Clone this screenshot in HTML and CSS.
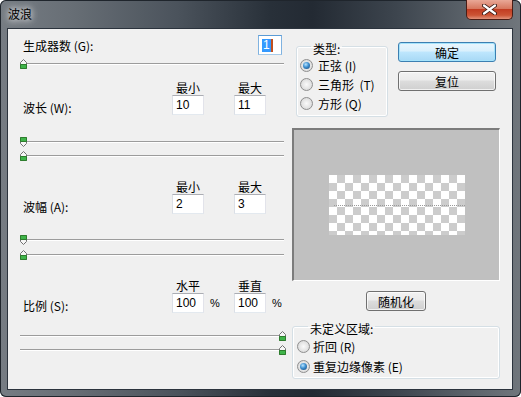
FILE: index.html
```html
<!DOCTYPE html>
<html lang="zh-CN">
<head>
    <meta charset="UTF-8">
    <meta name="viewport" content="width=device-width, initial-scale=1.0">
    <link rel="stylesheet" href="styles.css">
    <title>波浪</title>
</head>
<body>
    <div class="window">
        <div class="titlebar">
            <span class="title">波浪</span>
            <div class="close-btn">
                <svg width="15" height="11" viewBox="0 0 15 11">
                    <path d="M2 1.5 L13 9.5 M13 1.5 L2 9.5" stroke="#3b1a14" stroke-width="4" stroke-linecap="round"/>
                    <path d="M2 1.5 L13 9.5 M13 1.5 L2 9.5" stroke="#fff" stroke-width="2.2" stroke-linecap="round"/>
                </svg>
            </div>
        </div>

        <div class="client">
            <!-- left - sliders and fields -->
            <div class="left-col">
                <div class="count-row">
                    <span class="label">生成器数 (G):</span>
                    <div class="input count-input"><span class="sel">1</span><span class="caret"></span></div>
                </div>
                <div class="slider s-count">
                    <svg class="thumb" width="7" height="10" viewBox="0 0 7 10"><path d="M0.5 3.5 L3.5 0.5 L6.5 3.5 V9.5 H0.5 Z" fill="#f6f6f6" stroke="#707070"/><path d="M0.5 5.5 H6.5 V9.5 H0.5 Z" fill="#3fb44a" stroke="#2d7d2d"/></svg>
                </div>

                <div class="param p-a">
                    <span class="head col-1">最小</span>
                    <span class="head col-2">最大</span>
                    <span class="label">波长 (W):</span>
                    <div class="input">10</div>
                    <span></span>
                    <div class="input">11</div>
                </div>
                <div class="slider s-a1">
                    <svg class="thumb down" width="7" height="10" viewBox="0 0 7 10"><path d="M0.5 3.5 L3.5 0.5 L6.5 3.5 V9.5 H0.5 Z" fill="#f6f6f6" stroke="#707070"/><path d="M0.5 5.5 H6.5 V9.5 H0.5 Z" fill="#3fb44a" stroke="#2d7d2d"/></svg>
                </div>
                <div class="slider s-a2">
                    <svg class="thumb" width="7" height="10" viewBox="0 0 7 10"><path d="M0.5 3.5 L3.5 0.5 L6.5 3.5 V9.5 H0.5 Z" fill="#f6f6f6" stroke="#707070"/><path d="M0.5 5.5 H6.5 V9.5 H0.5 Z" fill="#3fb44a" stroke="#2d7d2d"/></svg>
                </div>

                <div class="param p-b">
                    <span class="head col-1">最小</span>
                    <span class="head col-2">最大</span>
                    <span class="label">波幅 (A):</span>
                    <div class="input">2</div>
                    <span></span>
                    <div class="input">3</div>
                </div>
                <div class="slider s-b1">
                    <svg class="thumb down" width="7" height="10" viewBox="0 0 7 10"><path d="M0.5 3.5 L3.5 0.5 L6.5 3.5 V9.5 H0.5 Z" fill="#f6f6f6" stroke="#707070"/><path d="M0.5 5.5 H6.5 V9.5 H0.5 Z" fill="#3fb44a" stroke="#2d7d2d"/></svg>
                </div>
                <div class="slider s-b2">
                    <svg class="thumb" width="7" height="10" viewBox="0 0 7 10"><path d="M0.5 3.5 L3.5 0.5 L6.5 3.5 V9.5 H0.5 Z" fill="#f6f6f6" stroke="#707070"/><path d="M0.5 5.5 H6.5 V9.5 H0.5 Z" fill="#3fb44a" stroke="#2d7d2d"/></svg>
                </div>

                <div class="param p-c">
                    <span class="head col-1">水平</span>
                    <span class="head col-2">垂直</span>
                    <span class="label">比例 (S):</span>
                    <div class="input">100</div>
                    <span class="pct">%</span>
                    <div class="input">100</div>
                    <span class="pct">%</span>
                </div>
                <div class="slider s-c1 to-end">
                    <svg class="thumb" width="7" height="10" viewBox="0 0 7 10"><path d="M0.5 3.5 L3.5 0.5 L6.5 3.5 V9.5 H0.5 Z" fill="#f6f6f6" stroke="#707070"/><path d="M0.5 5.5 H6.5 V9.5 H0.5 Z" fill="#3fb44a" stroke="#2d7d2d"/></svg>
                </div>
                <div class="slider s-c2 to-end">
                    <svg class="thumb" width="7" height="10" viewBox="0 0 7 10"><path d="M0.5 3.5 L3.5 0.5 L6.5 3.5 V9.5 H0.5 Z" fill="#f6f6f6" stroke="#707070"/><path d="M0.5 5.5 H6.5 V9.5 H0.5 Z" fill="#3fb44a" stroke="#2d7d2d"/></svg>
                </div>
            </div>

            <!-- right - type, buttons, preview -->
            <div class="right-col">
                <div class="top-row">
                    <fieldset class="group type-group">
                        <legend>类型:</legend>
                        <div class="option"><span class="radio checked"></span>正弦 (I)</div>
                        <div class="option"><span class="radio"></span>三角形 &nbsp;(T)</div>
                        <div class="option"><span class="radio"></span>方形 (Q)</div>
                    </fieldset>
                    <div class="buttons">
                        <div class="btn default">确定</div>
                        <div class="btn">复位</div>
                    </div>
                </div>

                <div class="preview">
                    <div class="checker"><div class="wave-line"></div></div>
                </div>

                <div class="btn random-btn">随机化</div>

                <fieldset class="group area-group">
                    <legend>未定义区域:</legend>
                    <div class="option"><span class="radio"></span>折回 (R)</div>
                    <div class="option"><span class="radio checked"></span>重复边缘像素 (E)</div>
                </fieldset>
            </div>
        </div>
    </div>
</body>
</html>
```

FILE: styles.css
```css
*{
    box-sizing: border-box;
}
html, body{
    margin: 0;
}
body{
    background-color: #fff;
    font-family: "Noto Sans CJK SC", sans-serif;
    font-size: 12px;
    color: #000;
}

.window{
    width: 521px;
    height: 397px;
    padding: 0 8px 7px 7px;
    border-radius: 6px;
    background: linear-gradient(90deg, #767c83 0%, #676e75 14%, #4b535c 34%, #283039 52%, #232a33 60%, #3d454e 76%, #60676e 92%, #70767c 100%);
    box-shadow: inset 0 0 0 1px #1f252c;
}

.titlebar{
    height: 28px;
    display: flex;
    justify-content: space-between;
    align-items: flex-start;
}
.title{
    padding: 6px 0 0 1px;
    line-height: 16px;
    text-shadow: 0 0 6px #fff, 0 0 10px rgba(255, 255, 255, 0.8);
}
.close-btn{
    width: 47px;
    height: 20px;
    display: flex;
    align-items: center;
    justify-content: center;
    border: 1px solid #4a1d15;
    border-top: none;
    border-radius: 0 0 5px 5px;
    background: linear-gradient(#e9a897 0%, #d7785f 45%, #c23d22 50%, #cc5435 80%, #e1937b 100%);
}

.client{
    height: 362px;
    display: flex;
    gap: 8px;
    padding: 6px 12px 0 12px;
    background-color: #f0f0f0;
    border: 1px solid #2b333d;
}

/* left column */
.left-col{
    width: 264px;
}
.label{
    padding-left: 3px;
    line-height: 14px;
    white-space: nowrap;
}
.count-row{
    height: 20px;
    display: flex;
    justify-content: space-between;
    align-items: center;
}
.count-row .label{
    padding-top: 1px;
}
.input{
    height: 20px;
    background-color: #fff;
    border: 1px solid;
    border-color: #abadb3 #e2e3ea #e3e9ef #dbdfe6;
    padding-left: 3px;
    font-family: "Liberation Sans", sans-serif;
    font-size: 12px;
    line-height: 18px;
}
.count-input{
    width: 24px;
    margin-right: 2px;
    display: flex;
    align-items: center;
    border-color: #5b9bd5 #7fb2e0 #a8cbe9 #7fb2e0;
}
.sel{
    background-color: #3399ff;
    color: #fff;
    line-height: 13px;
    padding: 0 1px;
}
.caret{
    width: 2px;
    height: 13px;
    background-color: #c0501f;
}

.slider{
    height: 10px;
    display: flex;
    align-items: flex-start;
    background:
        linear-gradient(#9c9c9c, #9c9c9c) 0 4px / 100% 1px no-repeat,
        linear-gradient(#fff, #fff) 0 5px / 100% 1px no-repeat;
    border-radius: 2px;
}
.slider.to-end{
    justify-content: flex-end;
    margin-right: -2px;
}
.thumb{
    display: block;
}
.thumb.down{
    transform: scaleY(-1);
}
.s-count{ margin-top: 4px; }
.s-a1{ margin-top: 22px; }
.s-a2{ margin-top: 4px; }
.s-b1{ margin-top: 21px; }
.s-b2{ margin-top: 5px; }
.s-c1{ margin-top: 18px; }
.s-c2{ margin-top: 4px; }

.param{
    display: grid;
    grid-template-columns: 152px 32px 30px 32px;
    grid-template-rows: 14px 20px;
}
.param > :not(.head){
    grid-row: 2;
}
.p-a{ margin-top: 12px; }
.p-b{ margin-top: 19px; }
.p-c{ margin-top: 19px; }
.head{
    grid-row: 1;
    text-align: center;
    line-height: 14px;
}
.col-1{ grid-column: 2; }
.col-2{ grid-column: 4; }
.param .label{
    grid-column: 1;
    align-self: end;
}
.pct{
    padding-left: 6px;
    font-family: "Liberation Sans", sans-serif;
    font-size: 11px;
    line-height: 20px;
}

/* right column */
.right-col{
    width: 208px;
}
.top-row{
    display: flex;
    margin-top: 1px;
}
.group{
    margin: 0;
    min-width: 0;
    border: 1px solid #d5dfe5;
    border-radius: 3px;
    box-shadow: inset 0 0 0 1px #fff;
}
.group legend{
    margin-left: 11px;
    padding: 6px 2px 0;
    line-height: 14px;
}
.type-group{
    width: 92px;
    margin-left: 4px;
    padding: 0 0 3px 3px;
}
.type-group .option{
    height: 19px;
}
.option{
    display: flex;
    align-items: center;
    gap: 5px;
    white-space: nowrap;
}
.radio{
    width: 13px;
    height: 13px;
    flex: none;
    display: flex;
    align-items: center;
    justify-content: center;
    border: 1px solid #8f8f8f;
    border-radius: 50%;
    background: radial-gradient(circle at 50% 50%, #fafafa 0%, #e6e6e6 50%, #cfcfcf 100%);
}
.radio.checked::after{
    content: "";
    width: 7px;
    height: 7px;
    border-radius: 50%;
    background: radial-gradient(circle at 40% 35%, #b8e4ff 0%, #3d8fd0 45%, #163f6e 100%);
}

.buttons{
    margin-left: 10px;
    margin-top: 6px;
    width: 98px;
    display: flex;
    flex-direction: column;
    gap: 9px;
}
.btn{
    height: 20px;
    display: flex;
    align-items: center;
    justify-content: center;
    border: 1px solid #707070;
    border-radius: 3px;
    background: linear-gradient(#f2f2f2 0%, #ebebeb 45%, #dddddd 50%, #cfcfcf 100%);
    box-shadow: inset 0 0 0 1px rgba(255, 255, 255, 0.7);
}
.btn.default{
    border-color: #3c7fb1;
    background: linear-gradient(#eaf6fd 0%, #d9f0fc 45%, #bee6fd 50%, #a7d9f5 100%);
    box-shadow: inset 0 0 0 1px #a5e3fb;
}

.preview{
    margin-top: 11px;
    height: 153px;
    display: flex;
    align-items: center;
    justify-content: center;
    background-color: #c0c0c0;
    border-style: solid;
    border-width: 2px 1px 1px 2px;
    border-color: #7c7c7c #fff #fff #7c7c7c;
}
.checker{
    width: 136px;
    height: 60px;
    display: flex;
    align-items: center;
    background: repeating-conic-gradient(#cccccc 0 25%, #fff 0 50%) 0 0 / 16px 16px;
}
.wave-line{
    width: 131px;
    margin-left: 5px;
    border-top: 1px dotted #9a9a9a;
}

.random-btn{
    width: 60px;
    margin: 10px auto 0;
}

.area-group{
    margin-top: 5px;
    padding: 0 0 2px 4px;
}
.area-group .option{
    height: 20px;
    gap: 3px;
}
```
